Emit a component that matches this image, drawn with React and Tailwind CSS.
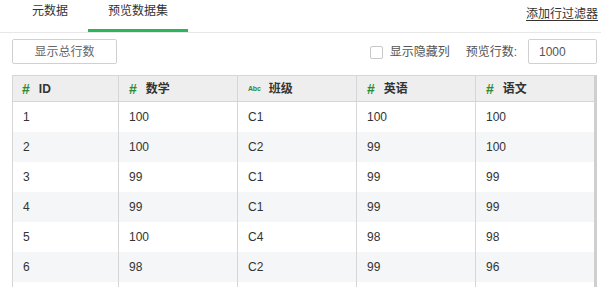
import React from "react";

const rows = [
  ["1", "100", "C1", "100", "100"],
  ["2", "100", "C2", "99", "100"],
  ["3", "99", "C1", "99", "99"],
  ["4", "99", "C1", "99", "99"],
  ["5", "100", "C4", "98", "98"],
  ["6", "98", "C2", "99", "96"],
  ["", "", "", "", ""],
];

function Hash() {
  return <span className="text-[#2e8b32] font-bold text-[14px] leading-none mr-[9px]">#</span>;
}

function Abc() {
  return (
    <span className="text-[#2e8b32] font-bold text-[7px] leading-none mr-[8px] tracking-[-0.2px]">Abc</span>
  );
}

export default function App() {
  const headers = [
    { t: "ID", icon: <Hash /> },
    { t: "数学", icon: <Hash /> },
    { t: "班级", icon: <Abc /> },
    { t: "英语", icon: <Hash /> },
    { t: "语文", icon: <Hash /> },
  ];
  return (
    <div className="w-[601px] h-[287px] overflow-hidden bg-white text-[#333] font-['Liberation_Sans','Noto_Sans_CJK_SC',sans-serif] text-[12px]">
      {/* tab bar */}
      <div className="h-[33px] border-b border-[#e8e8e8] flex items-start pl-3 pr-[3px]">
        <div className="h-[32px] px-5 pt-[4px] leading-[14px]">元数据</div>
        <div className="h-[32px] px-5 pt-[4px] leading-[14px] relative">
          预览数据集
          <div className="absolute left-0 right-0 bottom-0 h-[3px] bg-[#2db55d]" />
        </div>
        <div className="ml-auto pt-[7px] leading-[14px] underline underline-offset-2">添加行过滤器</div>
      </div>
      <div className="pl-3 pr-1">
        {/* toolbar */}
        <div className="mt-[6px] h-[25px] flex items-center">
          <div className="w-[105px] h-[25px] border border-[#d0d0d0] rounded-[2px] flex items-center justify-center text-[#666]">
            显示总行数
          </div>
          <div className="ml-auto flex items-center">
            <div className="w-[13px] h-[13px] border border-[#c8c8c8] rounded-[2px] bg-white mt-[2px]" />
            <span className="ml-[7px] text-[#555]">显示隐藏列</span>
            <span className="ml-[16px] text-[#555]">预览行数:</span>
            <div className="ml-[11px] w-[69px] h-[25px] border border-[#d0d0d0] rounded-[2px] flex items-center pl-[10px] text-[#555]">
              1000
            </div>
          </div>
        </div>
        {/* table */}
        <div className="mt-[11px] border-l border-t border-[#d6d6d6] border-r-[3px] border-r-[#cfcfcf]">
          <div className="grid grid-cols-[106px_119px_119px_119px_1fr] bg-[#eeeeee] border-b border-[#d6d6d6] h-[26px]">
            {headers.map((h, i) => (
              <div
                key={i}
                className={`flex items-center font-bold ${i < 4 ? "border-r border-[#d6d6d6]" : ""} ${i > 0 ? "pl-[10px]" : "pl-[9px]"}`}
              >
                {h.icon}
                <span className="leading-none">{h.t}</span>
              </div>
            ))}
          </div>
          {rows.map((r, ri) => (
            <div
              key={ri}
              className={`grid grid-cols-[106px_119px_119px_119px_1fr] h-[30px] ${ri % 2 === 1 ? "bg-[#f5f6f8]" : "bg-white"}`}
            >
              {r.map((c, ci) => (
                <div
                  key={ci}
                  className={`flex items-center pl-[10px] ${ci < 4 ? "border-r border-[#d6d6d6]" : ""}`}
                >
                  {c}
                </div>
              ))}
            </div>
          ))}
        </div>
      </div>
    </div>
  );
}
